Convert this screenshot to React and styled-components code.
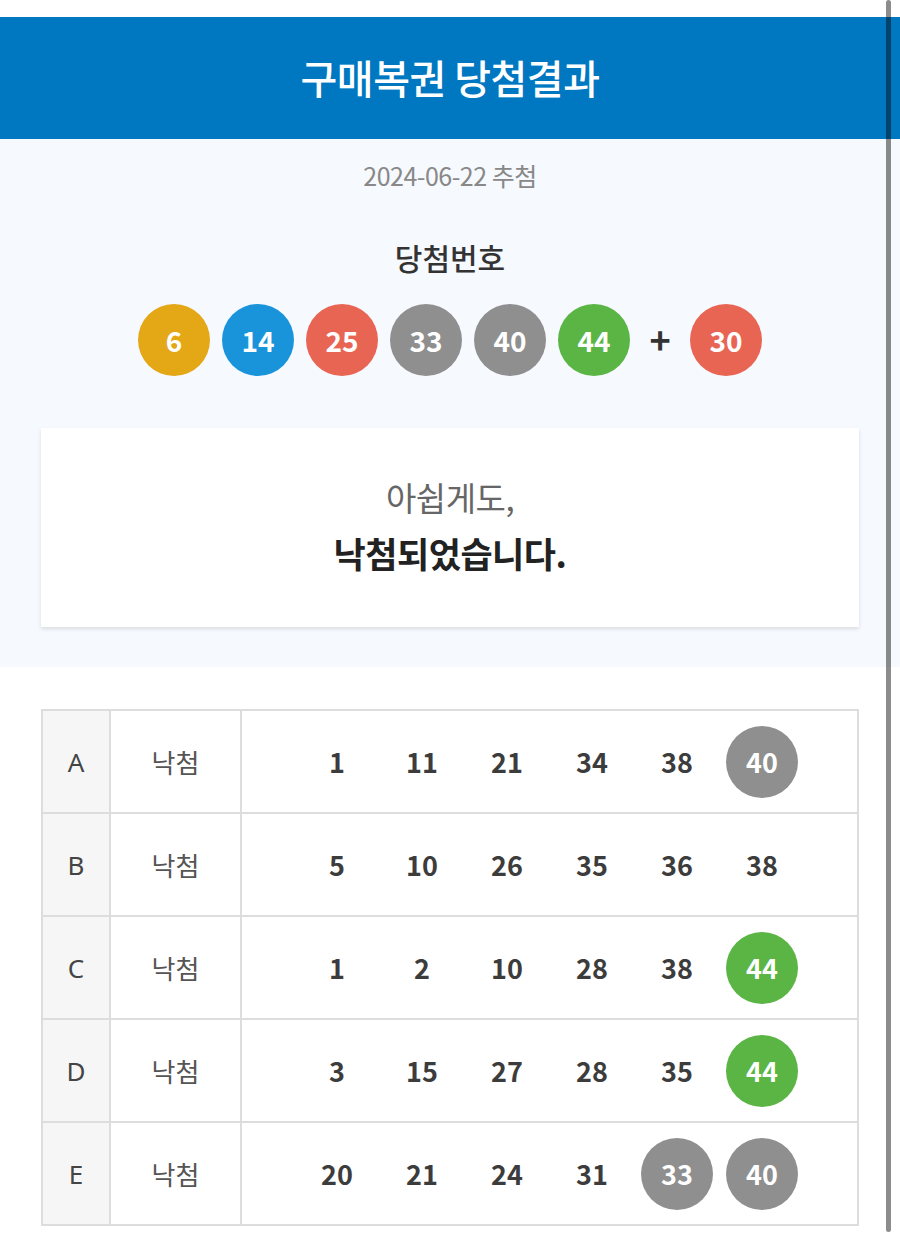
import React from "react";
import styled, { createGlobalStyle } from "styled-components";

const GlobalStyle = createGlobalStyle`
  html, body {
    margin: 0;
    padding: 0;
    background: #fff;
  }
  body {
    font-family: "Noto Sans CJK KR", "Noto Sans", sans-serif;
    color: #333;
    -webkit-font-smoothing: antialiased;
  }
`;

const BALL_COLORS = {
  yellow: "#e4a716",
  blue: "#1994da",
  red: "#e96553",
  gray: "#8f8f8f",
  green: "#5ab545",
};

function ballColor(n) {
  if (n <= 10) return BALL_COLORS.yellow;
  if (n <= 20) return BALL_COLORS.blue;
  if (n <= 30) return BALL_COLORS.red;
  if (n <= 40) return BALL_COLORS.gray;
  return BALL_COLORS.green;
}

const Page = styled.div`
  padding-top: 17px;
  min-height: 1246px;
  box-sizing: border-box;
`;

const Header = styled.header`
  position: sticky;
  top: 0;
  z-index: 2;
  height: 122px;
  background: #0078c1;
  display: flex;
  align-items: center;
  justify-content: center;
`;

const HeaderTitle = styled.h1`
  margin: -2px 0 0;
  color: #fff;
  font-size: 40px;
  font-weight: 500;
  letter-spacing: -0.5px;
`;

const Summary = styled.section`
  background: #f6f9fe;
  padding: 20px 41px 40px;
  display: flex;
  flex-direction: column;
  align-items: center;
`;

const DrawDate = styled.p`
  margin: 0;
  font-size: 25px;
  line-height: 32px;
  color: #888;
  letter-spacing: -0.5px;
`;

const SectionLabel = styled.h2`
  margin: 48px 0 0;
  font-size: 30px;
  line-height: 36px;
  font-weight: 500;
  color: #333;
`;

const BallRow = styled.div`
  margin-top: 29px;
  display: flex;
  align-items: center;
  gap: 12px;
`;

const Ball = styled.span`
  width: 72px;
  height: 72px;
  border-radius: 50%;
  background: ${(p) => p.$color};
  color: #fff;
  font-size: 28px;
  font-weight: 700;
  display: flex;
  align-items: center;
  justify-content: center;
  flex-shrink: 0;
`;

const Plus = styled.span`
  width: 36px;
  text-align: center;
  font-size: 36px;
  font-weight: 700;
  color: #333;
  line-height: 1;
  margin-top: -4px;
`;

const ResultCard = styled.div`
  margin-top: 52px;
  align-self: stretch;
  height: 199px;
  box-sizing: border-box;
  padding-bottom: 5px;
  background: #fff;
  box-shadow: 0 2px 4px rgba(0, 0, 0, 0.12);
  display: flex;
  flex-direction: column;
  align-items: center;
  justify-content: center;
  gap: 12px;
`;

const Regret = styled.p`
  margin: 0;
  font-size: 33px;
  line-height: 44px;
  color: #666;
  font-weight: 400;
  letter-spacing: -0.5px;
`;

const Verdict = styled.p`
  margin: 0;
  font-size: 35px;
  line-height: 44px;
  color: #222;
  font-weight: 700;
  letter-spacing: -0.5px;
`;

const TicketSection = styled.section`
  padding: 42px 41px 20px;
`;

const Ticket = styled.div`
  border: 2px solid #ddd;
`;

const TicketRow = styled.div`
  display: grid;
  grid-template-columns: 68px 131px 1fr;
  height: 101px;
  border-bottom: 2px solid #ddd;

  &:last-child {
    border-bottom: none;
  }
`;

const Cell = styled.div`
  display: flex;
  align-items: center;
  justify-content: center;
  border-right: 2px solid #ddd;
  background: ${(p) => (p.$shaded ? "#f6f6f6" : "#fff")};

  &:last-child {
    border-right: none;
  }
`;

const SlotLabel = styled.span`
  font-size: 26px;
  color: #444;
  font-family: "Noto Sans", "Noto Sans CJK KR", sans-serif;
`;

const Status = styled.span`
  font-size: 26px;
  color: #555;
`;

const Numbers = styled.div`
  display: flex;
  gap: 13px;
`;

const Num = styled.span`
  width: 72px;
  height: 72px;
  border-radius: 50%;
  display: flex;
  align-items: center;
  justify-content: center;
  font-size: 27px;
  font-weight: 700;
  color: ${(p) => (p.$hit ? "#fff" : "#3c3c3c")};
  background: ${(p) => (p.$hit ? ballColor(p.$n) : "transparent")};
`;

const Scrollbar = styled.div`
  position: fixed;
  top: 0;
  right: 9px;
  width: 5px;
  height: 1232px;
  border-radius: 3px;
  background: rgba(0, 0, 0, 0.45);
  z-index: 5;
`;

const winning = [6, 14, 25, 33, 40, 44];
const bonus = 30;

const tickets = [
  { slot: "A", nums: [1, 11, 21, 34, 38, 40] },
  { slot: "B", nums: [5, 10, 26, 35, 36, 38] },
  { slot: "C", nums: [1, 2, 10, 28, 38, 44] },
  { slot: "D", nums: [3, 15, 27, 28, 35, 44] },
  { slot: "E", nums: [20, 21, 24, 31, 33, 40] },
];

export default function App() {
  return (
    <Page>
      <GlobalStyle />
      <Header>
        <HeaderTitle>구매복권 당첨결과</HeaderTitle>
      </Header>

      <Summary>
        <DrawDate>2024-06-22 추첨</DrawDate>
        <SectionLabel>당첨번호</SectionLabel>
        <BallRow>
          {winning.map((n) => (
            <Ball key={n} $color={ballColor(n)}>
              {n}
            </Ball>
          ))}
          <Plus>+</Plus>
          <Ball $color={ballColor(bonus)}>{bonus}</Ball>
        </BallRow>
        <ResultCard>
          <Regret>아쉽게도,</Regret>
          <Verdict>낙첨되었습니다.</Verdict>
        </ResultCard>
      </Summary>

      <TicketSection>
        <Ticket>
          {tickets.map((t) => (
            <TicketRow key={t.slot}>
              <Cell $shaded>
                <SlotLabel>{t.slot}</SlotLabel>
              </Cell>
              <Cell>
                <Status>낙첨</Status>
              </Cell>
              <Cell>
                <Numbers>
                  {t.nums.map((n) => (
                    <Num key={n} $n={n} $hit={winning.includes(n)}>
                      {n}
                    </Num>
                  ))}
                </Numbers>
              </Cell>
            </TicketRow>
          ))}
        </Ticket>
      </TicketSection>

      <Scrollbar />
    </Page>
  );
}
